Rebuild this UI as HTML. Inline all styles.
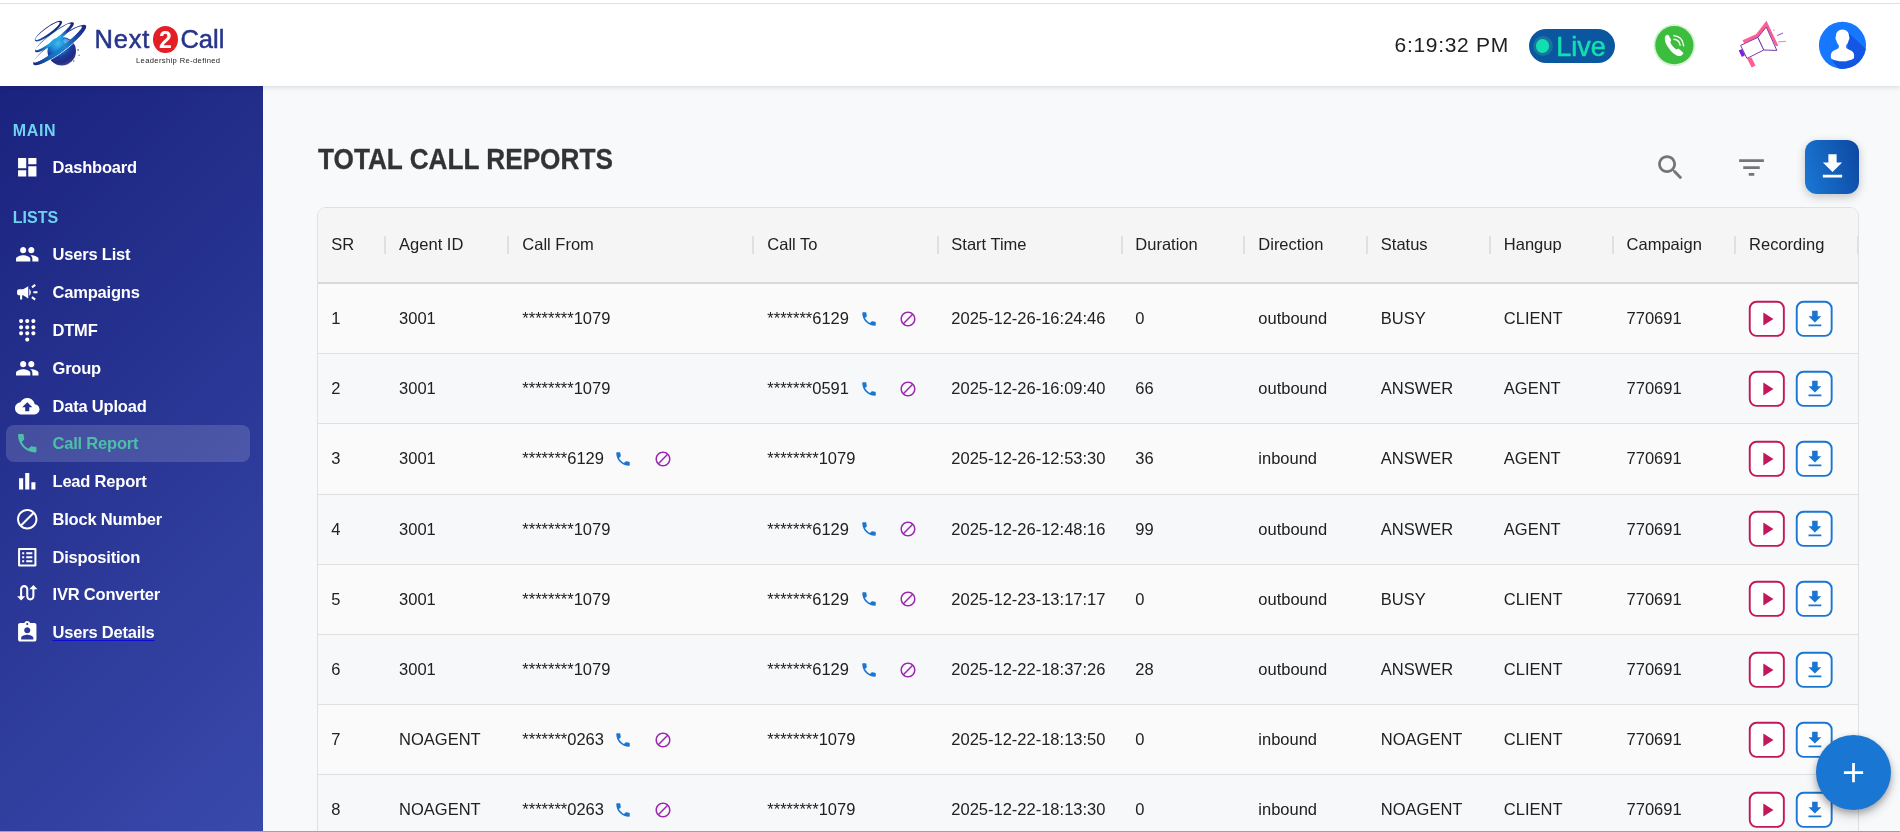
<!DOCTYPE html>
<html lang="en">
<head>
<meta charset="utf-8">
<title>Next2Call - Total Call Reports</title>
<style>
*{box-sizing:border-box;margin:0;padding:0}
html,body{width:1900px;height:832px;overflow:hidden;background:#f8f9fb;font-family:"Liberation Sans",sans-serif;color:#222}
body{position:relative;will-change:transform}
.abs{position:absolute}
#topline{z-index:9;position:absolute;left:0;top:3px;width:1900px;height:1px;background:#dfe1e0}
#header{position:absolute;left:0;top:0;width:1900px;height:86px;background:#fff;box-shadow:0 1px 5px rgba(0,0,0,.14);z-index:5}
#sidebar{position:absolute;left:0;top:86px;width:263px;height:745px;background:linear-gradient(135deg,#1a237e 0%,#3949ab 100%);z-index:4}
#bottomline{position:absolute;left:0;top:831px;width:1900px;height:1px;background:#93aaa4;z-index:20}
.sec{position:absolute;left:12.8px;font-size:16px;font-weight:bold;letter-spacing:.1px;color:#6dd3ee;line-height:18px}
.nav{position:absolute;left:6px;width:244px;height:36px;border-radius:8px;color:#fff;font-weight:bold;font-size:16.5px;letter-spacing:-.2px;line-height:36px}
.nav svg{position:absolute;left:9px;top:5.7px;width:24.5px;height:24.5px;fill:#fff}
.nav span{position:absolute;left:46.5px;top:0;white-space:nowrap}
.nav span.ul{text-decoration:underline;text-decoration-color:#0b0bd8;text-decoration-thickness:1px;text-underline-offset:2px}
.nav.act{background:rgba(255,255,255,.15);color:#4dbfa8;height:37px}
.nav.act svg{fill:#4dbfa8}
#time{position:absolute;left:1394.5px;top:29px;font-size:21px;letter-spacing:.7px;color:#212121;line-height:32px;white-space:nowrap}
#live{position:absolute;left:1529px;top:29px;width:86px;height:33.5px;border-radius:17px;background:#0b579f}
#live .halo{position:absolute;left:3.5px;top:6.8px;width:20px;height:20px;border-radius:50%;background:#17739f}
#live .dot{position:absolute;left:6.6px;top:9.9px;width:13.8px;height:13.8px;border-radius:50%;background:#12dfb0}
#live b{position:absolute;left:27.3px;top:.5px;font-weight:normal;font-size:27px;line-height:34px;color:#12dfb0;-webkit-text-stroke:.55px #12dfb0}
h1{position:absolute;left:318px;top:142.2px;font-size:29px;line-height:34px;font-weight:bold;color:#333;-webkit-text-stroke:.3px #333;letter-spacing:0;transform:scaleX(.903);transform-origin:0 0;white-space:nowrap}
#tbl{position:absolute;left:317px;top:207px;width:1542px;height:700px;border:1px solid #e0e0e0;border-radius:9px 9px 0 0;background:#fafafa;overflow:hidden;font-size:16.5px;color:#212121}
#thead{position:absolute;left:0;top:0;width:1540px;height:75.6px;background:#f5f5f5;border-bottom:2px solid #d9d9d9}
.th{position:absolute;top:0;line-height:72px;white-space:nowrap}
.sep{position:absolute;top:28px;width:2px;height:18px;background:#e0e0e0}
.tr{position:absolute;left:0;width:1540px;height:70.2px;border-bottom:1px solid #e0e0e0}
.tr.ev{background:#f7f8fa}
.td{position:absolute;top:0;line-height:68px;white-space:nowrap}
.ic{position:absolute;width:18px;height:18px;top:25.7px}
.ic.ph{fill:#1976d2}
.ic.bl{fill:#9c27b0}
.rb{position:absolute;top:15.6px;width:38px;height:38px;overflow:visible}
.tb{position:absolute;width:33px;height:33px;fill:#757575}
#dlbtn{position:absolute;left:1805px;top:140px;width:54px;height:54px;border-radius:12px;background:linear-gradient(75deg,#1976d2 5%,#0d47a1 100%);box-shadow:0 3px 10px rgba(0,0,0,.22)}
#dlbtn svg{position:absolute;left:10.8px;top:9.8px;width:33px;height:33px;fill:#fff}
#fab{position:absolute;left:1816px;top:735px;width:75px;height:75px;border-radius:50%;background:#1976d2;box-shadow:0 3px 6px rgba(0,0,0,.25),0 6px 12px rgba(0,0,0,.16);z-index:10}
#fab svg{position:absolute;left:21px;top:21px;width:33px;height:33px;fill:#fff}
#lg1,#lg3{position:absolute;top:22px;font-size:25.5px;line-height:34px;color:#27348b;-webkit-text-stroke:.5px #27348b;white-space:nowrap}
#lg1{left:94.6px;letter-spacing:.75px}
#lg3{left:180.4px}
#lg2{position:absolute;left:152.8px;top:26.4px;width:25px;height:26.4px;border-radius:50%;background:#e31e24;color:#fff;font-weight:bold;font-size:23px;line-height:29.4px;text-align:center}
#lg4{position:absolute;left:136px;top:55.6px;font-size:7.6px;line-height:10px;color:#222;letter-spacing:.36px;white-space:nowrap}
</style>
</head>
<body>
<div id="topline"></div>
<div id="header">
<svg id="globe" viewBox="0 0 1040 832" style="position:absolute;left:30px;top:18px;width:65px;height:52px">
<defs>
<radialGradient id="sg" cx="0.36" cy="0.22" r="0.8"><stop offset="0" stop-color="#49b9ee"/><stop offset="0.35" stop-color="#1787d3"/><stop offset="0.62" stop-color="#1b3c9c"/><stop offset="0.85" stop-color="#242a80"/><stop offset="1" stop-color="#3a4192"/></radialGradient>
<linearGradient id="rg3" x1="0" y1="0" x2="1" y2="0"><stop offset="0" stop-color="#1c2585"/><stop offset="0.3" stop-color="#166fc4"/><stop offset="0.55" stop-color="#1a8ad5"/><stop offset="0.8" stop-color="#1f3f9e"/><stop offset="1" stop-color="#1d2582"/></linearGradient>
<linearGradient id="rg2" x1="0" y1="0" x2="1" y2="0"><stop offset="0" stop-color="#1b2a8a"/><stop offset="0.3" stop-color="#1a9fe0"/><stop offset="0.6" stop-color="#25aee8"/><stop offset="0.8" stop-color="#1b3a98"/><stop offset="1" stop-color="#191d70"/></linearGradient>
<linearGradient id="rg1" x1="0" y1="0" x2="1" y2="0"><stop offset="0" stop-color="#28509f"/><stop offset="0.4" stop-color="#1e2a85"/><stop offset="1" stop-color="#1a1f75"/></linearGradient>
<clipPath id="lowhalf"><rect x="-100" y="432" width="1300" height="400"/></clipPath>
</defs>
<g transform="rotate(-36.7 475 432)"><path fill-rule="evenodd" fill="url(#rg3)" d="M-48 432a523 108 0 1 0 1046 0a523 108 0 1 0 -1046 0zM-22 406.5a478 65.5 0 1 0 956 0a478 65.5 0 1 0 -956 0z"/></g>
<circle cx="508" cy="530" r="228" fill="url(#sg)"/>
<ellipse cx="600" cy="385" rx="70" ry="40" fill="#9cc4ee" opacity=".55" transform="rotate(25 600 385)"/>
<circle cx="770" cy="510" r="14" fill="#5f78b0"/><circle cx="786" cy="596" r="13" fill="#7488bb"/><circle cx="700" cy="688" r="13" fill="#5f78b0"/><circle cx="730" cy="640" r="6" fill="#b9c4dc"/><circle cx="766" cy="646" r="6" fill="#c5cde2"/><circle cx="760" cy="548" r="6" fill="#b9c4dc"/>
<g transform="rotate(-36.7 475 432)"><ellipse cx="475" cy="432" rx="527" ry="116" fill="none" stroke="#fff" stroke-width="12" clip-path="url(#lowhalf)"/></g>
<g transform="rotate(-36.7 475 432)"><path clip-path="url(#lowhalf)" fill-rule="evenodd" fill="url(#rg3)" d="M-48 432a523 108 0 1 0 1046 0a523 108 0 1 0 -1046 0zM-22 406.5a478 65.5 0 1 0 956 0a478 65.5 0 1 0 -956 0z"/></g>
<g transform="rotate(-37.1 392 308)"><path fill-rule="evenodd" fill="url(#rg2)" d="M7 308a385 80 0 1 0 770 0a385 80 0 1 0 -770 0zM29 291a349 47 0 1 0 698 0a349 47 0 1 0 -698 0z"/></g>
<g transform="rotate(-35.8 295 210)"><path fill-rule="evenodd" fill="url(#rg1)" d="M30 210a265 68 0 1 0 530 0a265 68 0 1 0 -530 0zM48 201a237 44 0 1 0 474 0a237 44 0 1 0 -474 0z"/></g>
</svg>
<div id="lg1">Next</div><div id="lg2">2</div><div id="lg3">Call</div><div id="lg4">Leadership Re-defined</div>
<div id="time">6:19:32 PM</div>
<div id="live"><i class="halo"></i><i class="dot"></i><b>Live</b></div>
<svg id="hic" viewBox="0 0 1900 831" style="position:absolute;left:1640px;top:10px;width:160px;height:70px">
<circle cx="408" cy="418" r="248" fill="#d3f1d3"/>
<circle cx="408" cy="418" r="227" fill="#3dbd3d"/>
<path d="M297 326C300 305 312 294 326 294C340 296 350 310 354 326L369 354C372 364 366 374 358 379C375 420 405 450 433 468C440 460 452 456 461 461L511 504C516 512 512 524 504 529C492 542 476 549 461 547C448 545 436 540 426 533C395 515 370 492 354 468C332 440 316 418 308 397C300 375 294 355 294 340z" fill="#fff"/>
<path d="M404 347C445 352 472 380 476 418" fill="none" stroke="#fff" stroke-width="16" stroke-linecap="round"/>
<path d="M401 304C468 310 512 356 518 426" fill="none" stroke="#fff" stroke-width="16" stroke-linecap="round"/>
<polygon points="1218,358 1378,288 1502,128 1642,420 1612,430 1498,204 1398,326 1236,396" fill="#ff5e93"/>
<polygon points="1272,578 1322,560 1372,658 1326,684" fill="#ff5e93"/>
<polygon points="1172,482 1212,462 1246,538 1210,558" fill="#7a1fe0"/>
<polygon points="1195,420 1400,325 1470,475 1270,575" fill="#fff" stroke="#6a2c9c" stroke-width="11" stroke-linejoin="round"/>
<polygon points="1400,325 1500,202 1625,480 1470,475" fill="#fff" stroke="#6a2c9c" stroke-width="11" stroke-linejoin="round"/>
<line x1="1628" y1="304" x2="1698" y2="273" stroke="#7a1fe0" stroke-width="10"/>
<line x1="1642" y1="378" x2="1734" y2="372" stroke="#ff5e93" stroke-width="10"/>
<line x1="1580" y1="244" x2="1602" y2="234" stroke="#ff5e93" stroke-width="8"/>
</svg>
<svg id="avatar" viewBox="0 0 1070 832" style="position:absolute;left:1800px;top:10px;width:90px;height:70px">
<defs><clipPath id="avc"><circle cx="505" cy="420" r="280"/></clipPath></defs>
<circle cx="505" cy="420" r="280" fill="#1677ff"/>
<g clip-path="url(#avc)"><polygon points="575,270 900,570 900,900 620,900 380,600 560,620" fill="#1356e4"/></g>
<path d="M505 232c48 0 80 34 78 84 8 6 8 30-4 44-4 26-18 46-30 60v30c10 16 60 26 84 56 12 16 14 48 6 70-30 22-90 34-134 34s-104-12-134-34c-8-22-6-54 6-70 24-30 74-40 84-56v-30c-12-14-26-34-30-60-12-14-12-38-4-44-2-50 30-84 78-84z" fill="#fff"/>
</svg>
</div>
<div id="sidebar">
<div class="sec" style="top:36px;letter-spacing:.6px">MAIN</div>
<div class="sec" style="top:123px;letter-spacing:0">LISTS</div>
<div class="nav" style="top:63px"><svg viewBox="0 0 24 24"><path d="M3 13h8V3H3v10zm0 8h8v-6H3v6zm10 0h8V11h-8v10zm0-18v6h8V3h-8z"/></svg><span>Dashboard</span></div>
<div class="nav" style="top:150px"><svg viewBox="0 0 24 24"><path d="M16 11c1.66 0 2.99-1.34 2.99-3S17.66 5 16 5c-1.66 0-3 1.34-3 3s1.34 3 3 3zm-8 0c1.66 0 2.99-1.34 2.99-3S9.66 5 8 5C6.34 5 5 6.34 5 8s1.34 3 3 3zm0 2c-2.33 0-7 1.17-7 3.5V19h14v-2.5c0-2.33-4.67-3.5-7-3.5zm8 0c-.29 0-.62.02-.97.05 1.16.84 1.97 1.97 1.97 3.45V19h6v-2.5c0-2.33-4.67-3.5-7-3.5z"/></svg><span>Users List</span></div>
<div class="nav" style="top:188px"><svg viewBox="0 0 24 24"><path d="M18 11v2h4v-2h-4zm-2 6.61c.96.71 2.21 1.65 3.2 2.39.4-.53.8-1.07 1.2-1.6-.99-.74-2.24-1.68-3.2-2.4-.4.54-.8 1.08-1.2 1.61zM20.4 5.6c-.4-.53-.8-1.07-1.2-1.6-.99.74-2.24 1.68-3.2 2.4.4.53.8 1.07 1.2 1.6.96-.72 2.21-1.65 3.2-2.4zM4 9c-1.1 0-2 .9-2 2v2c0 1.1.9 2 2 2h1v4h2v-4h1l5 3V6L8 9H4zm11.5 3c0-1.33-.58-2.53-1.5-3.35v6.69c.92-.81 1.5-2.01 1.5-3.34z"/></svg><span>Campaigns</span></div>
<div class="nav" style="top:226px"><svg viewBox="0 0 24 24"><path d="M12 19c-1.1 0-2 .9-2 2s.9 2 2 2 2-.9 2-2-.9-2-2-2zM6 1c-1.1 0-2 .9-2 2s.9 2 2 2 2-.9 2-2-.9-2-2-2zm0 6c-1.1 0-2 .9-2 2s.9 2 2 2 2-.9 2-2-.9-2-2-2zm0 6c-1.1 0-2 .9-2 2s.9 2 2 2 2-.9 2-2-.9-2-2-2zm12-8c1.1 0 2-.9 2-2s-.9-2-2-2-2 .9-2 2 .9 2 2 2zm-6 8c-1.1 0-2 .9-2 2s.9 2 2 2 2-.9 2-2-.9-2-2-2zm6 0c-1.1 0-2 .9-2 2s.9 2 2 2 2-.9 2-2-.9-2-2-2zm0-6c-1.1 0-2 .9-2 2s.9 2 2 2 2-.9 2-2-.9-2-2-2zm-6 0c-1.1 0-2 .9-2 2s.9 2 2 2 2-.9 2-2-.9-2-2-2zm0-6c-1.1 0-2 .9-2 2s.9 2 2 2 2-.9 2-2-.9-2-2-2z"/></svg><span>DTMF</span></div>
<div class="nav" style="top:264px"><svg viewBox="0 0 24 24"><path d="M16 11c1.66 0 2.99-1.34 2.99-3S17.66 5 16 5c-1.66 0-3 1.34-3 3s1.34 3 3 3zm-8 0c1.66 0 2.99-1.34 2.99-3S9.66 5 8 5C6.34 5 5 6.34 5 8s1.34 3 3 3zm0 2c-2.33 0-7 1.17-7 3.5V19h14v-2.5c0-2.33-4.67-3.5-7-3.5zm8 0c-.29 0-.62.02-.97.05 1.16.84 1.97 1.97 1.97 3.45V19h6v-2.5c0-2.33-4.67-3.5-7-3.5z"/></svg><span>Group</span></div>
<div class="nav" style="top:302px"><svg viewBox="0 0 24 24"><path d="M19.35 10.04C18.67 6.59 15.64 4 12 4 9.11 4 6.6 5.64 5.35 8.04 2.34 8.36 0 10.91 0 14c0 3.31 2.69 6 6 6h13c2.76 0 5-2.24 5-5 0-2.64-2.05-4.78-4.65-4.96zM14 13v4h-4v-4H7l5-5 5 5h-3z"/></svg><span>Data Upload</span></div>
<div class="nav act" style="top:339.2px"><svg viewBox="0 0 24 24"><path d="M6.62 10.79c1.44 2.83 3.76 5.14 6.59 6.59l2.2-2.2c.27-.27.67-.36 1.02-.24 1.12.37 2.33.57 3.57.57.55 0 1 .45 1 1V20c0 .55-.45 1-1 1-9.39 0-17-7.61-17-17 0-.55.45-1 1-1h3.5c.55 0 1 .45 1 1 0 1.25.2 2.45.57 3.57.11.35.03.74-.25 1.02l-2.2 2.2z"/></svg><span>Call Report</span></div>
<div class="nav" style="top:377px"><svg viewBox="0 0 24 24"><path d="M4 9h4v11H4zm12 4h4v7h-4zm-6-9h4v16h-4z"/></svg><span>Lead Report</span></div>
<div class="nav" style="top:415px"><svg viewBox="0 0 24 24"><path d="M12 2C6.48 2 2 6.48 2 12s4.48 10 10 10 10-4.48 10-10S17.52 2 12 2zM4 12c0-4.42 3.58-8 8-8 1.85 0 3.55.63 4.9 1.69L5.69 16.9C4.63 15.55 4 13.85 4 12zm8 8c-1.85 0-3.55-.63-4.9-1.69L18.31 7.1C19.37 8.45 20 10.15 20 12c0 4.42-3.58 8-8 8z"/></svg><span>Block Number</span></div>
<div class="nav" style="top:453px"><svg viewBox="0 0 24 24"><path d="M19 5v14H5V5h14m1.1-2H3.9c-.5 0-.9.4-.9.9v16.2c0 .4.4.9.9.9h16.2c.4 0 .9-.5.9-.9V3.9c0-.5-.5-.9-.9-.9zM11 7h6v2h-6V7zm0 4h6v2h-6v-2zm0 4h6v2h-6zM7 7h2v2H7zm0 4h2v2H7zm0 4h2v2H7z"/></svg><span>Disposition</span></div>
<div class="nav" style="top:489.7px"><svg viewBox="0 0 24 24"><path d="M18 4l-4 4h3v7c0 1.1-.9 2-2 2s-2-.9-2-2V8c0-2.21-1.79-4-4-4S5 5.790 5 8v7H2l4 4 4-4H7V8c0-1.1.9-2 2-2s2 .9 2 2v7c0 2.21 1.79 4 4 4s4-1.79 4-4V8h3l-4-4z"/></svg><span>IVR Converter</span></div>
<div class="nav" style="top:528px"><svg viewBox="0 0 24 24"><path d="M19 3h-4.18C14.4 1.84 13.3 1 12 1c-1.3 0-2.4.84-2.82 2H5c-1.1 0-2 .9-2 2v14c0 1.1.9 2 2 2h14c1.1 0 2-.9 2-2V5c0-1.1-.9-2-2-2zm-7 0c.55 0 1 .45 1 1s-.45 1-1 1-1-.45-1-1 .45-1 1-1zm0 4c1.660 0 3 1.340 3 3s-1.340 3-3 3-3-1.340-3-3 1.340-3 3-3zm6 12H6v-1.400c0-2 4-3.100 6-3.100s6 1.100 6 3.100V19z"/></svg><span class="ul">Users Details</span></div>
</div>
<h1>TOTAL CALL REPORTS</h1>
<svg class="tb" style="left:1653.5px;top:151px" viewBox="0 0 24 24"><path d="M15.5 14h-.79l-.28-.27C15.41 12.59 16 11.11 16 9.5 16 5.91 13.09 3 9.500 3S3 5.910 3 9.500 5.910 16 9.500 16c1.610 0 3.090-.59 4.230-1.570l.27.28v.79l5 4.990L20.490 19l-4.990-5zm-6 0C7.010 14 5 11.990 5 9.500S7.010 5 9.500 5 14 7.010 14 9.500 11.990 14 9.500 14z"/></svg>
<svg class="tb" style="left:1735px;top:150.5px" viewBox="0 0 24 24"><path d="M10 18h4v-2h-4v2zM3 6v2h18V6H3zm3 7h12v-2H6v2z"/></svg>
<div id="dlbtn"><svg viewBox="0 0 24 24"><path d="M19 9h-4V3H9v6H5l7 7 7-7zM5 18v2h14v-2H5z"/></svg></div>
<!--TABLE_S-->
<div id="tbl">
<div id="thead">
<div class="th" style="left:13.3px">SR</div>
<div class="th" style="left:81.1px">Agent ID</div>
<div class="th" style="left:204.3px">Call From</div>
<div class="th" style="left:449.3px">Call To</div>
<div class="th" style="left:633.3px">Start Time</div>
<div class="th" style="left:817.3px">Duration</div>
<div class="th" style="left:940.3px">Direction</div>
<div class="th" style="left:1062.8px">Status</div>
<div class="th" style="left:1185.8px">Hangup</div>
<div class="th" style="left:1308.6px">Campaign</div>
<div class="th" style="left:1431.1px">Recording</div>
<i class="sep" style="left:66.2px"></i>
<i class="sep" style="left:189.1px"></i>
<i class="sep" style="left:434.2px"></i>
<i class="sep" style="left:618.5px"></i>
<i class="sep" style="left:802.5px"></i>
<i class="sep" style="left:925.3px"></i>
<i class="sep" style="left:1048.2px"></i>
<i class="sep" style="left:1171.2px"></i>
<i class="sep" style="left:1294px"></i>
<i class="sep" style="left:1416.3px"></i>
<i class="sep" style="left:1538.6px"></i>
</div>
<div class="tr" style="top:76.0px">
<div class="td" style="left:13.3px">1</div>
<div class="td" style="left:81.1px">3001</div>
<div class="td" style="left:204.3px">********1079</div>
<div class="td" style="left:449.3px">*******6129</div>
<div class="td" style="left:633.3px">2025-12-26-16:24:46</div>
<div class="td" style="left:817.3px">0</div>
<div class="td" style="left:940.3px">outbound</div>
<div class="td" style="left:1062.8px">BUSY</div>
<div class="td" style="left:1185.8px">CLIENT</div>
<div class="td" style="left:1308.6px">770691</div>
<svg class="ic ph" style="left:541.65px" viewBox="0 0 24 24"><path d="M6.62 10.79c1.44 2.83 3.76 5.14 6.59 6.59l2.2-2.2c.27-.27.67-.36 1.02-.24 1.12.37 2.33.57 3.57.57.55 0 1 .45 1 1V20c0 .55-.45 1-1 1-9.39 0-17-7.61-17-17 0-.55.45-1 1-1h3.5c.55 0 1 .45 1 1 0 1.25.2 2.45.57 3.57.11.35.03.74-.25 1.02l-2.2 2.2z"/></svg>
<svg class="ic bl" style="left:581.1px" viewBox="0 0 24 24"><path d="M12 2C6.48 2 2 6.48 2 12s4.48 10 10 10 10-4.48 10-10S17.52 2 12 2zM4 12c0-4.42 3.58-8 8-8 1.85 0 3.55.63 4.9 1.69L5.69 16.9C4.63 15.55 4 13.85 4 12zm8 8c-1.85 0-3.55-.63-4.9-1.69L18.31 7.1C19.37 8.45 20 10.15 20 12c0 4.42-3.58 8-8 8z"/></svg>
<svg class="rb" style="left:1430.3px" viewBox="0 0 38 38"><rect x="1.75" y="1.75" width="34.1" height="34.1" rx="6.8" fill="#fff" stroke="#c2185b" stroke-width="1.9"/><path transform="translate(8 8) scale(.9167)" fill="#c2185b" d="M8 5v14l11-7z"/></svg>
<svg class="rb" style="left:1477.2px" viewBox="0 0 38 38"><rect x="1.75" y="1.75" width="34.9" height="34.1" rx="6.8" fill="#fff" stroke="#1976d2" stroke-width="1.9"/><path transform="translate(8.9 7.9) scale(.9167)" fill="#1976d2" d="M19 9h-4V3H9v6H5l7 7 7-7zM5 18v2h14v-2H5z"/></svg>
</div>
<div class="tr ev" style="top:146.2px">
<div class="td" style="left:13.3px">2</div>
<div class="td" style="left:81.1px">3001</div>
<div class="td" style="left:204.3px">********1079</div>
<div class="td" style="left:449.3px">*******0591</div>
<div class="td" style="left:633.3px">2025-12-26-16:09:40</div>
<div class="td" style="left:817.3px">66</div>
<div class="td" style="left:940.3px">outbound</div>
<div class="td" style="left:1062.8px">ANSWER</div>
<div class="td" style="left:1185.8px">AGENT</div>
<div class="td" style="left:1308.6px">770691</div>
<svg class="ic ph" style="left:541.65px" viewBox="0 0 24 24"><path d="M6.62 10.79c1.44 2.83 3.76 5.14 6.59 6.59l2.2-2.2c.27-.27.67-.36 1.02-.24 1.12.37 2.33.57 3.57.57.55 0 1 .45 1 1V20c0 .55-.45 1-1 1-9.39 0-17-7.61-17-17 0-.55.45-1 1-1h3.5c.55 0 1 .45 1 1 0 1.25.2 2.45.57 3.57.11.35.03.74-.25 1.02l-2.2 2.2z"/></svg>
<svg class="ic bl" style="left:581.1px" viewBox="0 0 24 24"><path d="M12 2C6.48 2 2 6.48 2 12s4.48 10 10 10 10-4.48 10-10S17.52 2 12 2zM4 12c0-4.42 3.58-8 8-8 1.85 0 3.55.63 4.9 1.69L5.69 16.9C4.63 15.55 4 13.85 4 12zm8 8c-1.85 0-3.55-.63-4.9-1.69L18.31 7.1C19.37 8.45 20 10.15 20 12c0 4.42-3.58 8-8 8z"/></svg>
<svg class="rb" style="left:1430.3px" viewBox="0 0 38 38"><rect x="1.75" y="1.75" width="34.1" height="34.1" rx="6.8" fill="#fff" stroke="#c2185b" stroke-width="1.9"/><path transform="translate(8 8) scale(.9167)" fill="#c2185b" d="M8 5v14l11-7z"/></svg>
<svg class="rb" style="left:1477.2px" viewBox="0 0 38 38"><rect x="1.75" y="1.75" width="34.9" height="34.1" rx="6.8" fill="#fff" stroke="#1976d2" stroke-width="1.9"/><path transform="translate(8.9 7.9) scale(.9167)" fill="#1976d2" d="M19 9h-4V3H9v6H5l7 7 7-7zM5 18v2h14v-2H5z"/></svg>
</div>
<div class="tr" style="top:216.4px">
<div class="td" style="left:13.3px">3</div>
<div class="td" style="left:81.1px">3001</div>
<div class="td" style="left:204.3px">*******6129</div>
<div class="td" style="left:449.3px">********1079</div>
<div class="td" style="left:633.3px">2025-12-26-12:53:30</div>
<div class="td" style="left:817.3px">36</div>
<div class="td" style="left:940.3px">inbound</div>
<div class="td" style="left:1062.8px">ANSWER</div>
<div class="td" style="left:1185.8px">AGENT</div>
<div class="td" style="left:1308.6px">770691</div>
<svg class="ic ph" style="left:295.5px" viewBox="0 0 24 24"><path d="M6.62 10.79c1.44 2.83 3.76 5.14 6.59 6.59l2.2-2.2c.27-.27.67-.36 1.02-.24 1.12.37 2.33.57 3.57.57.55 0 1 .45 1 1V20c0 .55-.45 1-1 1-9.39 0-17-7.61-17-17 0-.55.45-1 1-1h3.5c.55 0 1 .45 1 1 0 1.25.2 2.45.57 3.57.11.35.03.74-.25 1.02l-2.2 2.2z"/></svg>
<svg class="ic bl" style="left:336.1px" viewBox="0 0 24 24"><path d="M12 2C6.48 2 2 6.48 2 12s4.48 10 10 10 10-4.48 10-10S17.52 2 12 2zM4 12c0-4.42 3.58-8 8-8 1.85 0 3.55.63 4.9 1.69L5.69 16.9C4.63 15.55 4 13.85 4 12zm8 8c-1.85 0-3.55-.63-4.9-1.69L18.31 7.1C19.37 8.45 20 10.15 20 12c0 4.42-3.58 8-8 8z"/></svg>
<svg class="rb" style="left:1430.3px" viewBox="0 0 38 38"><rect x="1.75" y="1.75" width="34.1" height="34.1" rx="6.8" fill="#fff" stroke="#c2185b" stroke-width="1.9"/><path transform="translate(8 8) scale(.9167)" fill="#c2185b" d="M8 5v14l11-7z"/></svg>
<svg class="rb" style="left:1477.2px" viewBox="0 0 38 38"><rect x="1.75" y="1.75" width="34.9" height="34.1" rx="6.8" fill="#fff" stroke="#1976d2" stroke-width="1.9"/><path transform="translate(8.9 7.9) scale(.9167)" fill="#1976d2" d="M19 9h-4V3H9v6H5l7 7 7-7zM5 18v2h14v-2H5z"/></svg>
</div>
<div class="tr ev" style="top:286.6px">
<div class="td" style="left:13.3px">4</div>
<div class="td" style="left:81.1px">3001</div>
<div class="td" style="left:204.3px">********1079</div>
<div class="td" style="left:449.3px">*******6129</div>
<div class="td" style="left:633.3px">2025-12-26-12:48:16</div>
<div class="td" style="left:817.3px">99</div>
<div class="td" style="left:940.3px">outbound</div>
<div class="td" style="left:1062.8px">ANSWER</div>
<div class="td" style="left:1185.8px">AGENT</div>
<div class="td" style="left:1308.6px">770691</div>
<svg class="ic ph" style="left:541.65px" viewBox="0 0 24 24"><path d="M6.62 10.79c1.44 2.83 3.76 5.14 6.59 6.59l2.2-2.2c.27-.27.67-.36 1.02-.24 1.12.37 2.33.57 3.57.57.55 0 1 .45 1 1V20c0 .55-.45 1-1 1-9.39 0-17-7.61-17-17 0-.55.45-1 1-1h3.5c.55 0 1 .45 1 1 0 1.25.2 2.45.57 3.57.11.35.03.74-.25 1.02l-2.2 2.2z"/></svg>
<svg class="ic bl" style="left:581.1px" viewBox="0 0 24 24"><path d="M12 2C6.48 2 2 6.48 2 12s4.48 10 10 10 10-4.48 10-10S17.52 2 12 2zM4 12c0-4.42 3.58-8 8-8 1.85 0 3.55.63 4.9 1.69L5.69 16.9C4.63 15.55 4 13.85 4 12zm8 8c-1.85 0-3.55-.63-4.9-1.69L18.31 7.1C19.37 8.45 20 10.15 20 12c0 4.42-3.58 8-8 8z"/></svg>
<svg class="rb" style="left:1430.3px" viewBox="0 0 38 38"><rect x="1.75" y="1.75" width="34.1" height="34.1" rx="6.8" fill="#fff" stroke="#c2185b" stroke-width="1.9"/><path transform="translate(8 8) scale(.9167)" fill="#c2185b" d="M8 5v14l11-7z"/></svg>
<svg class="rb" style="left:1477.2px" viewBox="0 0 38 38"><rect x="1.75" y="1.75" width="34.9" height="34.1" rx="6.8" fill="#fff" stroke="#1976d2" stroke-width="1.9"/><path transform="translate(8.9 7.9) scale(.9167)" fill="#1976d2" d="M19 9h-4V3H9v6H5l7 7 7-7zM5 18v2h14v-2H5z"/></svg>
</div>
<div class="tr" style="top:356.8px">
<div class="td" style="left:13.3px">5</div>
<div class="td" style="left:81.1px">3001</div>
<div class="td" style="left:204.3px">********1079</div>
<div class="td" style="left:449.3px">*******6129</div>
<div class="td" style="left:633.3px">2025-12-23-13:17:17</div>
<div class="td" style="left:817.3px">0</div>
<div class="td" style="left:940.3px">outbound</div>
<div class="td" style="left:1062.8px">BUSY</div>
<div class="td" style="left:1185.8px">CLIENT</div>
<div class="td" style="left:1308.6px">770691</div>
<svg class="ic ph" style="left:541.65px" viewBox="0 0 24 24"><path d="M6.62 10.79c1.44 2.83 3.76 5.14 6.59 6.59l2.2-2.2c.27-.27.67-.36 1.02-.24 1.12.37 2.33.57 3.57.57.55 0 1 .45 1 1V20c0 .55-.45 1-1 1-9.39 0-17-7.61-17-17 0-.55.45-1 1-1h3.5c.55 0 1 .45 1 1 0 1.25.2 2.45.57 3.57.11.35.03.74-.25 1.02l-2.2 2.2z"/></svg>
<svg class="ic bl" style="left:581.1px" viewBox="0 0 24 24"><path d="M12 2C6.48 2 2 6.48 2 12s4.48 10 10 10 10-4.48 10-10S17.52 2 12 2zM4 12c0-4.42 3.58-8 8-8 1.85 0 3.55.63 4.9 1.69L5.69 16.9C4.63 15.55 4 13.85 4 12zm8 8c-1.85 0-3.55-.63-4.9-1.69L18.31 7.1C19.37 8.45 20 10.15 20 12c0 4.42-3.58 8-8 8z"/></svg>
<svg class="rb" style="left:1430.3px" viewBox="0 0 38 38"><rect x="1.75" y="1.75" width="34.1" height="34.1" rx="6.8" fill="#fff" stroke="#c2185b" stroke-width="1.9"/><path transform="translate(8 8) scale(.9167)" fill="#c2185b" d="M8 5v14l11-7z"/></svg>
<svg class="rb" style="left:1477.2px" viewBox="0 0 38 38"><rect x="1.75" y="1.75" width="34.9" height="34.1" rx="6.8" fill="#fff" stroke="#1976d2" stroke-width="1.9"/><path transform="translate(8.9 7.9) scale(.9167)" fill="#1976d2" d="M19 9h-4V3H9v6H5l7 7 7-7zM5 18v2h14v-2H5z"/></svg>
</div>
<div class="tr ev" style="top:427.0px">
<div class="td" style="left:13.3px">6</div>
<div class="td" style="left:81.1px">3001</div>
<div class="td" style="left:204.3px">********1079</div>
<div class="td" style="left:449.3px">*******6129</div>
<div class="td" style="left:633.3px">2025-12-22-18:37:26</div>
<div class="td" style="left:817.3px">28</div>
<div class="td" style="left:940.3px">outbound</div>
<div class="td" style="left:1062.8px">ANSWER</div>
<div class="td" style="left:1185.8px">CLIENT</div>
<div class="td" style="left:1308.6px">770691</div>
<svg class="ic ph" style="left:541.65px" viewBox="0 0 24 24"><path d="M6.62 10.79c1.44 2.83 3.76 5.14 6.59 6.59l2.2-2.2c.27-.27.67-.36 1.02-.24 1.12.37 2.33.57 3.57.57.55 0 1 .45 1 1V20c0 .55-.45 1-1 1-9.39 0-17-7.61-17-17 0-.55.45-1 1-1h3.5c.55 0 1 .45 1 1 0 1.25.2 2.45.57 3.57.11.35.03.74-.25 1.02l-2.2 2.2z"/></svg>
<svg class="ic bl" style="left:581.1px" viewBox="0 0 24 24"><path d="M12 2C6.48 2 2 6.48 2 12s4.48 10 10 10 10-4.48 10-10S17.52 2 12 2zM4 12c0-4.42 3.58-8 8-8 1.85 0 3.55.63 4.9 1.69L5.69 16.9C4.63 15.55 4 13.85 4 12zm8 8c-1.85 0-3.55-.63-4.9-1.69L18.31 7.1C19.37 8.45 20 10.15 20 12c0 4.42-3.58 8-8 8z"/></svg>
<svg class="rb" style="left:1430.3px" viewBox="0 0 38 38"><rect x="1.75" y="1.75" width="34.1" height="34.1" rx="6.8" fill="#fff" stroke="#c2185b" stroke-width="1.9"/><path transform="translate(8 8) scale(.9167)" fill="#c2185b" d="M8 5v14l11-7z"/></svg>
<svg class="rb" style="left:1477.2px" viewBox="0 0 38 38"><rect x="1.75" y="1.75" width="34.9" height="34.1" rx="6.8" fill="#fff" stroke="#1976d2" stroke-width="1.9"/><path transform="translate(8.9 7.9) scale(.9167)" fill="#1976d2" d="M19 9h-4V3H9v6H5l7 7 7-7zM5 18v2h14v-2H5z"/></svg>
</div>
<div class="tr" style="top:497.2px">
<div class="td" style="left:13.3px">7</div>
<div class="td" style="left:81.1px">NOAGENT</div>
<div class="td" style="left:204.3px">*******0263</div>
<div class="td" style="left:449.3px">********1079</div>
<div class="td" style="left:633.3px">2025-12-22-18:13:50</div>
<div class="td" style="left:817.3px">0</div>
<div class="td" style="left:940.3px">inbound</div>
<div class="td" style="left:1062.8px">NOAGENT</div>
<div class="td" style="left:1185.8px">CLIENT</div>
<div class="td" style="left:1308.6px">770691</div>
<svg class="ic ph" style="left:295.5px" viewBox="0 0 24 24"><path d="M6.62 10.79c1.44 2.83 3.76 5.14 6.59 6.59l2.2-2.2c.27-.27.67-.36 1.02-.24 1.12.37 2.33.57 3.57.57.55 0 1 .45 1 1V20c0 .55-.45 1-1 1-9.39 0-17-7.61-17-17 0-.55.45-1 1-1h3.5c.55 0 1 .45 1 1 0 1.25.2 2.45.57 3.57.11.35.03.74-.25 1.02l-2.2 2.2z"/></svg>
<svg class="ic bl" style="left:336.1px" viewBox="0 0 24 24"><path d="M12 2C6.48 2 2 6.48 2 12s4.48 10 10 10 10-4.48 10-10S17.52 2 12 2zM4 12c0-4.42 3.58-8 8-8 1.85 0 3.55.63 4.9 1.69L5.69 16.9C4.63 15.55 4 13.85 4 12zm8 8c-1.85 0-3.55-.63-4.9-1.69L18.31 7.1C19.37 8.45 20 10.15 20 12c0 4.42-3.58 8-8 8z"/></svg>
<svg class="rb" style="left:1430.3px" viewBox="0 0 38 38"><rect x="1.75" y="1.75" width="34.1" height="34.1" rx="6.8" fill="#fff" stroke="#c2185b" stroke-width="1.9"/><path transform="translate(8 8) scale(.9167)" fill="#c2185b" d="M8 5v14l11-7z"/></svg>
<svg class="rb" style="left:1477.2px" viewBox="0 0 38 38"><rect x="1.75" y="1.75" width="34.9" height="34.1" rx="6.8" fill="#fff" stroke="#1976d2" stroke-width="1.9"/><path transform="translate(8.9 7.9) scale(.9167)" fill="#1976d2" d="M19 9h-4V3H9v6H5l7 7 7-7zM5 18v2h14v-2H5z"/></svg>
</div>
<div class="tr ev" style="top:567.4px">
<div class="td" style="left:13.3px">8</div>
<div class="td" style="left:81.1px">NOAGENT</div>
<div class="td" style="left:204.3px">*******0263</div>
<div class="td" style="left:449.3px">********1079</div>
<div class="td" style="left:633.3px">2025-12-22-18:13:30</div>
<div class="td" style="left:817.3px">0</div>
<div class="td" style="left:940.3px">inbound</div>
<div class="td" style="left:1062.8px">NOAGENT</div>
<div class="td" style="left:1185.8px">CLIENT</div>
<div class="td" style="left:1308.6px">770691</div>
<svg class="ic ph" style="left:295.5px" viewBox="0 0 24 24"><path d="M6.62 10.79c1.44 2.83 3.76 5.14 6.59 6.59l2.2-2.2c.27-.27.67-.36 1.02-.24 1.12.37 2.33.57 3.57.57.55 0 1 .45 1 1V20c0 .55-.45 1-1 1-9.39 0-17-7.61-17-17 0-.55.45-1 1-1h3.5c.55 0 1 .45 1 1 0 1.25.2 2.45.57 3.57.11.35.03.74-.25 1.02l-2.2 2.2z"/></svg>
<svg class="ic bl" style="left:336.1px" viewBox="0 0 24 24"><path d="M12 2C6.48 2 2 6.48 2 12s4.48 10 10 10 10-4.48 10-10S17.52 2 12 2zM4 12c0-4.42 3.58-8 8-8 1.85 0 3.55.63 4.9 1.69L5.69 16.9C4.63 15.55 4 13.85 4 12zm8 8c-1.85 0-3.55-.63-4.9-1.69L18.31 7.1C19.37 8.45 20 10.15 20 12c0 4.42-3.58 8-8 8z"/></svg>
<svg class="rb" style="left:1430.3px" viewBox="0 0 38 38"><rect x="1.75" y="1.75" width="34.1" height="34.1" rx="6.8" fill="#fff" stroke="#c2185b" stroke-width="1.9"/><path transform="translate(8 8) scale(.9167)" fill="#c2185b" d="M8 5v14l11-7z"/></svg>
<svg class="rb" style="left:1477.2px" viewBox="0 0 38 38"><rect x="1.75" y="1.75" width="34.9" height="34.1" rx="6.8" fill="#fff" stroke="#1976d2" stroke-width="1.9"/><path transform="translate(8.9 7.9) scale(.9167)" fill="#1976d2" d="M19 9h-4V3H9v6H5l7 7 7-7zM5 18v2h14v-2H5z"/></svg>
</div>
</div>
<!--TABLE_E-->
<div id="fab"><svg viewBox="0 0 24 24"><path d="M19 13h-6v6h-2v-6H5v-2h6V5h2v6h6v2z"/></svg></div>
<div id="bottomline"></div>
</body>
</html>
